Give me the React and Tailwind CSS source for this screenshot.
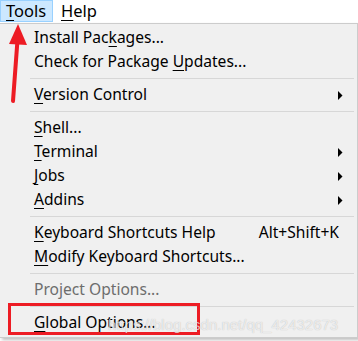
import React from "react";

const U = ({ children }) => <span className="underline underline-offset-[3px] decoration-1">{children}</span>;

const Arrow = () => (
  <svg width="5" height="9" viewBox="0 0 5 9" className="block">
    <polygon points="0,0 4.5,4.5 0,9" fill="#000" />
  </svg>
);

const Item = ({ children, right, sub, disabled }) => (
  <div className={"flex items-center h-[24px] pl-[34px] pr-[14px] " + (disabled ? "text-[#6d6d6d]" : "text-black")}>
    <span className="flex-1 whitespace-nowrap">{children}</span>
    {right && <span className="mr-[4px] whitespace-nowrap">{right}</span>}
    {sub && <Arrow />}
  </div>
);

const Sep = () => (
  <div className="h-[9px] flex items-center pl-[30px] pr-[3px]">
    <div className="h-px w-full bg-[#d7d7d7]" />
  </div>
);

export default () => {
  return (
    <div className="relative w-[358px] h-[341px] bg-white overflow-hidden text-[15.6px] font-['Noto_Sans','Liberation_Sans',sans-serif]">
      <div className="flex h-[23px] items-start text-[16.5px]">
        <div className="h-[22px] w-[53px] pl-[5px] flex items-center bg-[#cce8ff] border border-[#99d1ff]">
          <span><U>T</U>ools</span>
        </div>
        <div className="h-[22px] pl-[8px] flex items-center">
          <span><U>H</U>elp</span>
        </div>
      </div>

      <div className="w-[358px] h-[315px] bg-[#f0f0f0] border-t border-r border-b border-[#cccccc] pt-[2px] shadow-[2px_2px_3px_rgba(0,0,0,0.25)]">
        <Item>Install Pac<U>k</U>ages...</Item>
        <Item>Check for Package <U>U</U>pdates...</Item>
        <Sep />
        <Item sub><U>V</U>ersion Control</Item>
        <Sep />
        <Item><U>S</U>hell...</Item>
        <Item sub><U>T</U>erminal</Item>
        <Item sub><U>J</U>obs</Item>
        <Item sub><U>A</U>ddins</Item>
        <Sep />
        <Item right="Alt+Shift+K"><U>K</U>eyboard Shortcuts Help</Item>
        <Item><U>M</U>odify Keyboard Shortcuts...</Item>
        <Sep />
        <Item disabled>Project Options...</Item>
        <Sep />
        <Item><U>G</U>lobal Options...</Item>
      </div>

      <svg className="absolute left-0 top-0" width="40" height="110" viewBox="0 0 40 110">
        <line x1="13" y1="101" x2="17.5" y2="40" stroke="#ed1c24" strokeWidth="4" strokeLinecap="round" />
        <polygon points="18,24 27,45 9,44" fill="#ed1c24" />
      </svg>

      <div className="absolute left-[8px] top-[303px] w-[192px] h-[32px] border-[3px] border-[#ed1c24]" />

      <div className="absolute left-[108px] top-[314px] text-[15px] text-white/70 font-['Liberation_Sans',sans-serif] [text-shadow:0_0_1px_rgba(0,0,0,0.25)] whitespace-nowrap">
        https://blog.csdn.net/qq_42432673
      </div>
    </div>
  );
};
